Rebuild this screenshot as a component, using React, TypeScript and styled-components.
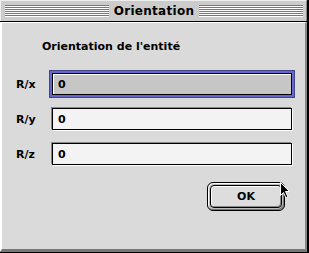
import React from 'react'
import styled, { createGlobalStyle } from 'styled-components'

const GlobalStyle = createGlobalStyle`
  html, body {
    margin: 0;
    padding: 0;
    background: #000;
  }
  body {
    font-family: 'DejaVu Sans', 'Liberation Sans', sans-serif;
  }
`

const Window = styled.div`
  position: relative;
  width: 309px;
  height: 253px;
  box-sizing: border-box;
  display: flex;
  flex-direction: column;
  background: #000;
  padding: 0 2px 1px 0;
`

const TitleBar = styled.div`
  height: 21px;
  box-sizing: border-box;
  background: #cccccc;
  border-top: 1px solid #eeeeee;
  border-left: 1px solid #eeeeee;
  border-right: 1px solid #888;
  display: flex;
  align-items: center;
  padding: 0 3px 1px 4px;
  gap: 5px;
`

const Stripes = styled.div`
  flex: 1;
  height: 12px;
  background: repeating-linear-gradient(
    to bottom,
    #777777 0px,
    #777777 1px,
    #ffffff 1px,
    #ffffff 2px
  );
`

const Title = styled.div`
  font-family: 'DejaVu Sans', sans-serif;
  font-weight: bold;
  font-size: 12px;
  color: #000;
  letter-spacing: 0.3px;
`

const Body = styled.div`
  flex: 1;
  margin-top: 1px;
  background: #dadada;
  border-left: 2px solid #ffffff;
  border-top: 1px solid #ffffff;
  border-right: 2px solid #888888;
  border-bottom: 3px solid #777777;
  display: flex;
  flex-direction: column;
  padding: 0 0 0 14px;
`

const Heading = styled.div`
  margin: 17px 0 0 26px;
  font-family: 'DejaVu Sans', sans-serif;
  font-weight: bold;
  font-size: 11px;
  color: #000;
`

const Form = styled.div`
  display: flex;
  flex-direction: column;
  gap: 13px;
  margin-top: 20px;
`

const Row = styled.div`
  display: flex;
  align-items: center;
`

const Label = styled.div`
  width: 36px;
  font-family: 'DejaVu Sans', sans-serif;
  font-weight: bold;
  font-size: 11px;
  color: #000;
`

const Field = styled.div<{ $focused?: boolean }>`
  width: 240px;
  height: 22px;
  box-sizing: border-box;
  border: 1px solid #000;
  background: ${(p) => (p.$focused ? '#c6c6c6' : '#f3f3f3')};
  box-shadow: ${(p) =>
    p.$focused
      ? 'inset 1px 1px 0 #ffffff, 0 0 0 2px #6666cc, 0 0 0 3px #444488'
      : '-1px -1px 0 0 #888888, 1px 1px 0 0 #ffffff'};
  display: flex;
  align-items: center;
  padding-left: 5px;
  font-family: 'DejaVu Sans', sans-serif;
  font-weight: bold;
  font-size: 11px;
  color: #000;
`

const ButtonRow = styled.div`
  display: flex;
  justify-content: flex-end;
  padding-right: 20px;
  margin-top: 17px;
`

const ButtonRing = styled.div`
  box-sizing: border-box;
  width: 78px;
  height: 29px;
  border: 1px solid #000;
  border-radius: 6px;
  background: #bbbbbb;
  padding: 2px;
  display: flex;
  box-shadow: inset 1px 1px 0 #ffffff, inset -1px -1px 0 #777;
`

const Button = styled.button`
  flex: 1;
  border: 1px solid #000;
  border-radius: 4px;
  background: #dddddd;
  box-shadow: inset 1px 1px 0 #ffffff, inset -1px -1px 0 #888;
  font-family: 'DejaVu Sans', sans-serif;
  font-weight: bold;
  font-size: 11px;
  color: #000;
  padding: 0;
`

const Cursor = styled.svg`
  position: absolute;
  left: 280px;
  top: 182px;
`

export default function App() {
  return (
    <>
      <GlobalStyle />
      <Window>
        <TitleBar>
          <Stripes />
          <Title>Orientation</Title>
          <Stripes />
        </TitleBar>
        <Body>
          <Heading>Orientation de l'entité</Heading>
          <Form>
            <Row>
              <Label>R/x</Label>
              <Field $focused>0</Field>
            </Row>
            <Row>
              <Label>R/y</Label>
              <Field>0</Field>
            </Row>
            <Row>
              <Label>R/z</Label>
              <Field>0</Field>
            </Row>
          </Form>
          <ButtonRow>
            <ButtonRing>
              <Button>OK</Button>
            </ButtonRing>
          </ButtonRow>
        </Body>
        <Cursor width="11" height="17" viewBox="0 0 11 17">
          <path d="M0.5 0.5 L0.5 13.5 L3.5 10.5 L6 16 L8 15 L5.5 9.5 L9.5 9.5 Z" fill="#000" stroke="#fff" strokeWidth="1" />
        </Cursor>
      </Window>
    </>
  )
}
